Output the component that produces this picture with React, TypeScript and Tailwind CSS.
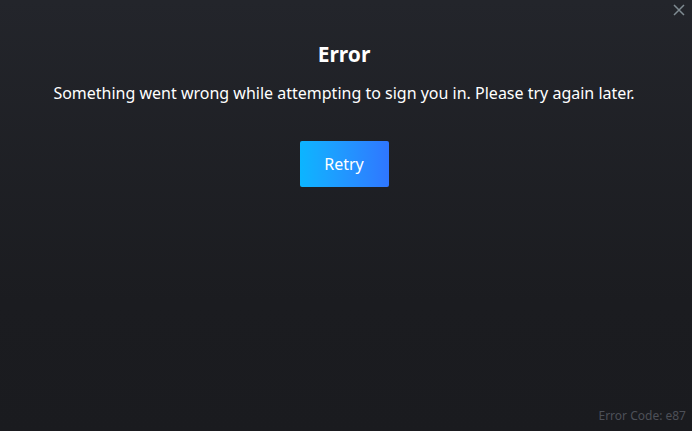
export default function App() {
  return (
    <div
      className="relative flex h-[431px] w-[692px] flex-col items-center bg-gradient-to-b from-[#23252b] via-[#1b1c20] via-70% to-[#1a1b1f] pr-[4px] text-white"
      style={{ fontFamily: '"Noto Sans", sans-serif' }}
    >
      <button className="absolute right-[7px] top-[4px] text-[#7f8b92]">
        <svg width="12" height="12" viewBox="0 0 12 12" fill="none" stroke="currentColor" strokeWidth="1.5">
          <path d="M1 1 L11 11 M11 1 L1 11" />
        </svg>
      </button>

      <h1 className="mt-[39px] text-[21px] font-bold leading-[31px]">Error</h1>
      <p className="mt-[11px] text-[16px] leading-[24px]">
        Something went wrong while attempting to sign you in. Please try again later.
      </p>

      <button className="mt-[36px] h-[46px] w-[89px] rounded-[2px] bg-gradient-to-r from-[#0bb5ff] to-[#2f76ff] text-[16px]">
        Retry
      </button>

      <div className="mt-auto mb-[6px] self-end pr-[2px] text-[12px] text-[#4d5058]">
        Error Code: e87
      </div>
    </div>
  );
}
